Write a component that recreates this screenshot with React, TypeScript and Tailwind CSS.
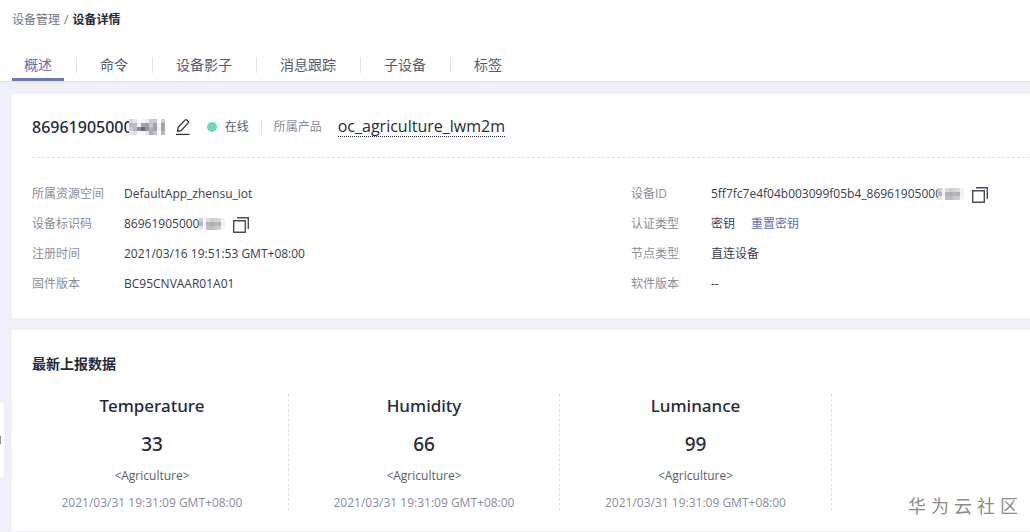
import { clsx } from "clsx";

const TABS = ["概述", "命令", "设备影子", "消息跟踪", "子设备", "标签"];

const REPORTS = [
  { name: "Temperature", value: 33 },
  { name: "Humidity", value: 66 },
  { name: "Luminance", value: 99 },
];

interface MosaicProps {
  cells: string[];
  columns: number;
  className?: string;
}

// Covers the last digits of a device number with coloured blocks
function Mosaic({ cells, columns, className }: MosaicProps) {
  const rows = Math.ceil(cells.length / columns);
  return (
    <svg
      viewBox={`0 0 ${columns} ${rows}`}
      preserveAspectRatio="none"
      shapeRendering="crispEdges"
      className={className}
      aria-hidden="true"
    >
      {cells.map((fill, i) => (
        <rect key={i} x={i % columns} y={Math.floor(i / columns)} width="1" height="1" fill={fill} />
      ))}
    </svg>
  );
}

const TITLE_CELLS = [
  "#d6d8de", "#e2e4ea", "#ffffff", "#f6f6f8", "#eeeef2", "#c7cad3", "#c4c6cf", "#ffffff", "#cfd1d8",
  "#b4b6c1", "#b9bbc6", "#f8f8fa", "#a3a6b4", "#9a9dab", "#c6c8d0", "#9fa2b1", "#f5f5f7", "#9fa2af",
  "#c9cad2", "#b5b8c2", "#8a8d9e", "#666a7e", "#8f93a2", "#b0b3be", "#9da0ae", "#f3f3f6", "#a3a6b2",
  "#e6e7eb", "#d9dbe1", "#ffffff", "#ffffff", "#e5e6ea", "#a9abb7", "#c4c6ce", "#ffffff", "#b7b9c4",
];

const TEXT_CELLS = [
  "#cfcfd4", "#f7f7f8", "#dcdce0", "#cfcfd4", "#d6d6da", "#d9d9dd", "#f3f3f4",
  "#b9b9be", "#f2f2f4", "#b5b5bb", "#adaeb4", "#b5b5bb", "#b0b1b7", "#efeff1",
  "#e6e6e9", "#fafafb", "#bebec4", "#bdbdc3", "#c9c9ce", "#cfcfd4", "#f8f8f9",
];

function PencilIcon() {
  return (
    <svg width="16" height="18" viewBox="0 0 16 18" fill="none" stroke="#252b3a" strokeWidth="1.2">
      <path d="M2.5 13.2 3 9.6 10.2 1.9a1 1 0 0 1 1.4 0l1.7 1.6a1 1 0 0 1 0 1.4L6 12.6Z" />
      <path d="M1 16.4h13.5" />
    </svg>
  );
}

function CopyButton() {
  return (
    <button type="button" aria-label="复制" className="mt-0.5">
      <svg width="16" height="16" viewBox="0 0 16 16" fill="none" stroke="#4a4e59" strokeWidth="1.4">
        <path d="M.7 3.7h11.6v11.6H.7z" />
        <path d="M4 .7h11.3V12" />
      </svg>
    </button>
  );
}

interface FieldProps {
  label: string;
  wide?: boolean;
  children: React.ReactNode;
}

function Field({ label, wide, children }: FieldProps) {
  return (
    <div className="flex h-[30px] items-center">
      <dt className={clsx("shrink-0 text-[#8a8e99]", wide ? "w-[92px]" : "w-20")}>{label}</dt>
      <dd className="flex items-center whitespace-nowrap text-[#383d4a]">{children}</dd>
    </div>
  );
}

export default function App() {
  return (
    <div className="min-h-screen bg-[#efeff7] pb-px font-['Open_Sans','Noto_Sans_CJK_SC',sans-serif] text-xs text-[#252b3a]">
      <header className="border-b border-[#dfe1e6] bg-white px-3">
        <nav className="flex h-10 items-center gap-1" aria-label="位置">
          <a href="#devices" className="text-[#71757f]">设备管理</a>
          <span className="text-[#71757f]">/</span>
          <span className="font-bold">设备详情</span>
        </nav>
        <nav className="flex h-[41px] items-end text-sm">
          {TABS.map((tab, i) => (
            <div key={tab} className="flex items-center">
              {i > 0 && <span className="ml-3 mr-[11px] h-4 w-px bg-[#dfe1e6]" />}
              <button
                type="button"
                className={clsx(
                  "h-8 border-b-3 px-3 pt-0.5",
                  i === 0 ? "border-[#6a76b8] text-[#5e6fb5]" : "border-transparent text-[#575d6c]"
                )}
              >
                {tab}
              </button>
            </div>
          ))}
        </nav>
      </header>

      <main className="flex flex-col gap-3 pt-3 pl-3">
        <section className="bg-white pb-[19px] pl-5">
          <div className="flex h-16 items-center border-b border-dashed border-[#dfe1e6] pt-0.5">
            <h1 className="flex items-center font-['Noto_Sans',sans-serif] text-base font-medium">
              86961905000
              <Mosaic cells={TITLE_CELLS} columns={9} className="-ml-1 h-4 w-9" />
            </h1>
            <button type="button" aria-label="编辑" className="ml-2.5">
              <PencilIcon />
            </button>
            <span className="ml-4 size-[10px] rounded-full bg-[#6bdcb5]" />
            <span className="ml-2 text-[#575d6c]">在线</span>
            <span className="mx-3 h-4 w-px bg-[#dfe1e6]" />
            <span className="text-[#8a8e99]">所属产品</span>
            <a href="#product" className="ml-4 border-b border-dotted border-[#252b3a] text-base leading-5">
              oc_agriculture_lwm2m
            </a>
          </div>

          <dl className="grid grid-cols-[599px_1fr] pt-[21px]">
            <Field label="所属资源空间" wide>DefaultApp_zhensu_iot</Field>
            <Field label="设备ID">
              5ff7fc7e4f04b003099f05b4_86961905000
              <Mosaic cells={TEXT_CELLS} columns={7} className="-ml-1 mr-2 h-3 w-[26px]" />
              <CopyButton />
            </Field>
            <Field label="设备标识码" wide>
              86961905000
              <Mosaic cells={TEXT_CELLS} columns={7} className="mr-2 h-3 w-[26px]" />
              <CopyButton />
            </Field>
            <Field label="认证类型">
              密钥
              <a href="#reset" className="ml-4 text-[#5e6fb5]">重置密钥</a>
            </Field>
            <Field label="注册时间" wide>2021/03/16 19:51:53 GMT+08:00</Field>
            <Field label="节点类型">直连设备</Field>
            <Field label="固件版本" wide>BC95CNVAAR01A01</Field>
            <Field label="软件版本">--</Field>
          </dl>
        </section>

        <section className="relative bg-white pt-6 pb-5">
          <h2 className="pl-5 text-sm font-bold">最新上报数据</h2>
          <div className="mt-5 ml-1 grid grid-cols-[273px_271px_272px] text-center">
            {REPORTS.map((report) => (
              <article key={report.name} className="border-r border-dashed border-[#dfe1e6]">
                <h3 className="font-['Noto_Sans',sans-serif] text-[17px] leading-6 font-medium">{report.name}</h3>
                <p className="mt-3 font-['Noto_Sans',sans-serif] text-[19px] leading-7 font-medium">{report.value}</p>
                <p className="mt-2.5 text-[#575d6c]">&lt;Agriculture&gt;</p>
                <p className="mt-[11px] text-[#8a8e99]">2021/03/31 19:31:09 GMT+08:00</p>
              </article>
            ))}
          </div>
          <p className="absolute right-3 bottom-3 font-['Liberation_Sans','Noto_Sans_CJK_SC',sans-serif] text-lg leading-6 text-[#8c8c8c]">
            华 为 云 社 区
          </p>
        </section>
      </main>

      {/* Handle of the collapsed side menu */}
      <button
        type="button"
        aria-label="展开菜单"
        className="fixed top-[402px] left-0 flex h-[76px] w-1 items-center overflow-hidden rounded-r-sm bg-white"
      >
        <span className="h-2 w-px bg-[#8a8e99]" />
      </button>
    </div>
  );
}
